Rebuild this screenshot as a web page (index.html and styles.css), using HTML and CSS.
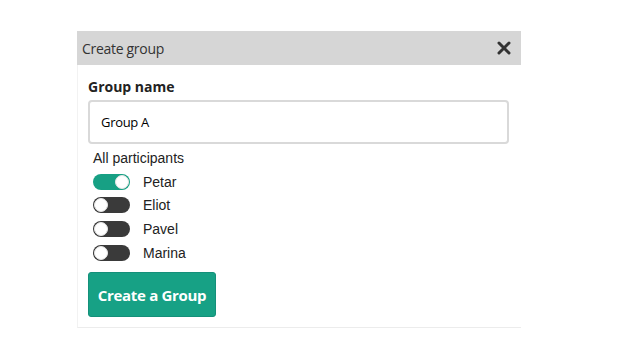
FILE: index.html
```html
<!DOCTYPE html>
<html lang="en">
<head>
    <meta charset="UTF-8">
    <title>Create group</title>
    <link rel="stylesheet" href="styles.css">
</head>
<body>
    <div class="panel">
        <div class="panel-header">
            <span class="panel-title">Create group</span>
            <svg class="close" width="14" height="14" viewBox="0 0 14 14">
                <path d="M2 2 L12 12 M12 2 L2 12" stroke="#333" stroke-width="3" stroke-linecap="round"/>
            </svg>
        </div>
        <div class="panel-body">
            <label class="field-label" for="groupName">Group name</label>
            <input id="groupName" class="text-input" type="text" value="Group A">

            <div class="participants">
                <div class="participants-title">All participants</div>
                <div class="participant">
                    <span class="toggle on"></span>
                    <span class="name">Petar</span>
                </div>
                <div class="participant">
                    <span class="toggle"></span>
                    <span class="name">Eliot</span>
                </div>
                <div class="participant">
                    <span class="toggle"></span>
                    <span class="name">Pavel</span>
                </div>
                <div class="participant">
                    <span class="toggle"></span>
                    <span class="name">Marina</span>
                </div>
            </div>

            <button class="btn-create" type="button">Create a Group</button>
        </div>
    </div>
</body>
</html>
```

FILE: styles.css
```css
body {
    margin: 0;
    background-color: #fff;
    font-family: "Open Sans", sans-serif;
    color: #333;
}
.panel {
    width: 443px;
    margin: 31px 0 0 77px;
    border-left: 1px solid #f2f2f2;
    border-bottom: 1px solid #ececec;
}
.panel-header {
    height: 34px;
    background-color: #d6d6d6;
    display: flex;
    align-items: center;
    justify-content: space-between;
    padding: 0 10px 0 5px;
    margin-left: -1px;
}
.panel-title {
    font-size: 14px;
    color: #333;
    letter-spacing: -0.3px;
}
.close {
    display: block;
}
.panel-body {
    padding: 12px 10px 10px 10px;
}
.field-label {
    display: block;
    font-size: 14px;
    font-weight: 700;
    color: #222;
    line-height: 19px;
    margin-bottom: 4px;
}
.text-input {
    box-sizing: border-box;
    display: block;
    width: 421px;
    height: 44px;
    padding: 0 11px;
    border: 2px solid #d9d9d9;
    border-radius: 4px;
    font-family: "Open Sans", sans-serif;
    font-size: 13px;
    letter-spacing: -0.3px;
    color: #000;
    outline: none;
}
.participants {
    padding: 5px 0 0 5px;
    font-family: "Liberation Sans", Arial, sans-serif;
    font-size: 14px;
    color: #222;
}
.participants-title {
    line-height: 18px;
    margin-bottom: 3px;
}
.participant {
    display: flex;
    align-items: center;
    height: 23.6px;
}
.toggle {
    position: relative;
    box-sizing: border-box;
    width: 37px;
    height: 16px;
    border-radius: 8px;
    background-color: #3a3a3a;
    margin-right: 13px;
}
.toggle::after {
    content: "";
    position: absolute;
    top: 1px;
    left: 1px;
    box-sizing: border-box;
    width: 14px;
    height: 14px;
    border-radius: 50%;
    border: 1px solid #e6e6e6;
    background-color: #fff;
}
.toggle.on {
    background-color: #17a084;
}
.toggle.on::after {
    left: 22px;
}
.btn-create {
    margin-top: 8px;
    width: 128px;
    height: 45px;
    border: 1px solid #14907a;
    border-radius: 3px;
    background-color: #17a185;
    color: #fff;
    font-family: "Open Sans", sans-serif;
    font-size: 15px;
    font-weight: 700;
    letter-spacing: -0.3px;
    cursor: pointer;
}
```
